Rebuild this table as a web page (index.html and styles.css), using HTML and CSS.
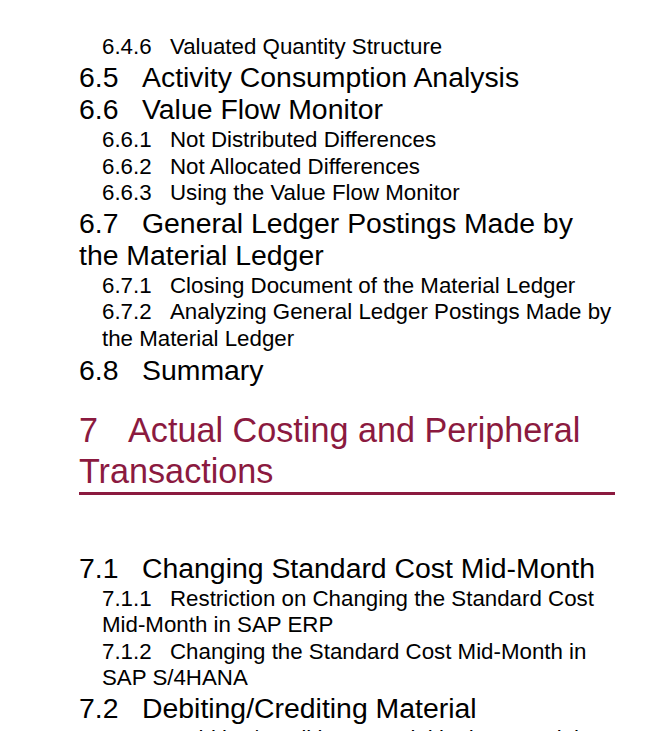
FILE: index.html
```html
<!DOCTYPE html>
<html lang="en">
<head>
<meta charset="utf-8">
<title>Contents</title>
<link rel="stylesheet" href="styles.css">
</head>
<body>
<div class="page">
  <div class="sub">
    <div class="l3"><span class="n3">6.4.6</span>Valuated Quantity Structure</div>
  </div>
  <div class="l2"><span class="n2">6.5</span>Activity Consumption Analysis</div>
  <div class="l2"><span class="n2">6.6</span>Value Flow Monitor</div>
  <div class="sub">
    <div class="l3"><span class="n3">6.6.1</span>Not Distributed Differences</div>
    <div class="l3"><span class="n3">6.6.2</span>Not Allocated Differences</div>
    <div class="l3"><span class="n3">6.6.3</span>Using the Value Flow Monitor</div>
  </div>
  <div class="l2"><span class="n2">6.7</span>General Ledger Postings Made by the Material Ledger</div>
  <div class="sub">
    <div class="l3"><span class="n3">6.7.1</span>Closing Document of the Material Ledger</div>
    <div class="l3"><span class="n3">6.7.2</span>Analyzing General Ledger Postings Made by the Material Ledger</div>
  </div>
  <div class="l2 after-sub"><span class="n2">6.8</span>Summary</div>

  <h1 class="l1"><span class="n1">7</span>Actual Costing and Peripheral Transactions</h1>

  <div class="l2"><span class="n2">7.1</span>Changing Standard Cost Mid-Month</div>
  <div class="sub">
    <div class="l3"><span class="n3">7.1.1</span>Restriction on Changing the Standard Cost Mid-Month in SAP ERP</div>
    <div class="l3"><span class="n3">7.1.2</span>Changing the Standard Cost Mid-Month in SAP S/4HANA</div>
  </div>
  <div class="l2"><span class="n2">7.2</span>Debiting/Crediting Material</div>
  <div class="sub">
    <div class="l3"><span class="n3">7.2.1</span>Debiting/Crediting Material in the Material Ledger</div>
  </div>
</div>
</body>
</html>
```
FILE: styles.css
```css
html, body {
  margin: 0;
  padding: 0;
  background: #ffffff;
}

body {
  font-family: "Liberation Sans", Arial, sans-serif;
  color: #000000;
  height: 731px;
  overflow: hidden;
}

.page {
  width: 536px;
  padding: 32px 0 0 79px;
}

.sub {
  margin: 2px 0 1px 0;
}

.l2 {
  font-size: 28.4px;
  line-height: 32px;
}

.l2.after-sub {
  margin-top: 2px;
}

.n2 {
  display: inline-block;
  width: 63px;
}

.l3 {
  font-size: 22.3px;
  line-height: 26.3px;
  margin-left: 23px;
}

.n3 {
  display: inline-block;
  width: 68px;
}

.l1 {
  margin: 24px 0 57px 0;
  font-size: 34.2px;
  font-weight: normal;
  line-height: 41px;
  color: #8b1a3f;
  border-bottom: 3px solid #8b1a3f;
}

.n1 {
  display: inline-block;
  width: 49px;
}
```
